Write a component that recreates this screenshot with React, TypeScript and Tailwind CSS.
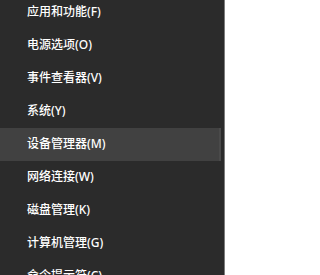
import React from "react";

const items = [
  "应用和功能(F)",
  "电源选项(O)",
  "事件查看器(V)",
  "系统(Y)",
  "设备管理器(M)",
  "网络连接(W)",
  "磁盘管理(K)",
  "计算机管理(G)",
  "命令提示符(C)",
];

export default function App() {
  return (
    <div
      className="w-[225px] h-[275px] overflow-hidden bg-[#2b2b2b] flex"
      style={{ fontFamily: '"Noto Sans", "Noto Sans CJK SC", sans-serif' }}
    >
      <div className="flex-1 flex flex-col mt-[-4.5px]">
        {items.map((label, i) => (
          <div
            key={label}
            className={
              i === 4
                ? "h-[33px] shrink-0 flex items-center pl-[27px] mr-[1px] bg-[#414141] border-r-2 border-[#4a4a4a] text-white text-[12px] font-medium"
                : "h-[33px] shrink-0 flex items-center pl-[27px] text-white text-[12px] font-medium"
            }
          >
            {label}
          </div>
        ))}
      </div>
      <div className="w-[2px] shrink-0 bg-[#2b2b2b]" />
      <div className="w-[1px] shrink-0 bg-[#7d7d7d]" />
    </div>
  );
}
